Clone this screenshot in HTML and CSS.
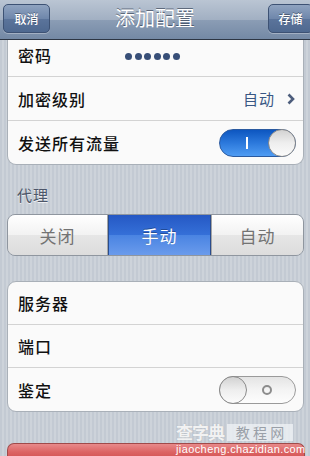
FILE: index.html
```html
<!DOCTYPE html>
<html lang="zh-CN">
<head>
<meta charset="utf-8">
<title>添加配置</title>
<link rel="stylesheet" href="styles.css">
</head>
<body>
<div class="screen">
  <header class="nav">
    <button class="nav-btn nav-btn-left">取消</button>
    <h1 class="nav-title">添加配置</h1>
    <button class="nav-btn nav-btn-right">存储</button>
  </header>
  <main class="content">
    <section class="group group-top">
      <div class="row row-first">
        <span class="row-label">密码</span>
        <span class="dots"><i></i><i></i><i></i><i></i><i></i><i></i></span>
      </div>
      <div class="row">
        <span class="row-label">加密级别</span>
        <span class="row-value">自动<svg class="chevron" width="8" height="12" viewBox="0 0 8 12"><path d="M1.5 1.5 L6 6 L1.5 10.5" fill="none" stroke="#4d5d7c" stroke-width="2.6" stroke-linecap="butt" stroke-linejoin="miter"/></svg></span>
      </div>
      <div class="row row-last">
        <span class="row-label">发送所有流量</span>
        <span class="switch switch-on"><span class="switch-mark-on"></span><span class="knob"></span></span>
      </div>
    </section>

    <div class="section-label">代理</div>

    <div class="segmented">
      <div class="seg seg-first">关闭</div>
      <div class="seg seg-active">手动</div>
      <div class="seg seg-last">自动</div>
    </div>

    <section class="group group-second">
      <div class="row">
        <span class="row-label">服务器</span>
      </div>
      <div class="row">
        <span class="row-label">端口</span>
      </div>
      <div class="row row-last">
        <span class="row-label">鉴定</span>
        <span class="switch switch-off"><span class="knob"></span><span class="switch-mark-off"></span></span>
      </div>
    </section>

    <div class="red-bar"></div>
  </main>

  <div class="watermark">
    <div class="wm-top"><span class="wm-brand">查字典</span><span class="wm-box">教 程 网</span></div>
    <div class="wm-url">jiaocheng.chazidian.com</div>
  </div>
</div>
</body>
</html>
```

FILE: styles.css
```css
html, body {
  margin: 0;
  padding: 0;
}
body {
  width: 310px;
  height: 456px;
  overflow: hidden;
  font-family: "Noto Sans CJK SC", "Liberation Sans", sans-serif;
}
.screen {
  position: relative;
  width: 310px;
  height: 456px;
  overflow: hidden;
  background: repeating-linear-gradient(90deg, #c3cad3 0px, #c3cad3 2px, #cdd3da 2px, #cdd3da 4px);
}

/* NAV */
.nav {
  height: 40px;
  box-sizing: border-box;
  display: flex;
  align-items: center;
  justify-content: space-between;
  position: relative;
  background: linear-gradient(#bac5d3 0%, #a2b0c3 50%, #8b9db5 51%, #7489a5 100%);
  border-bottom: 1px solid #2d3644;
  padding: 0 0 0 3px;
}
.nav-title {
  margin: 0;
  font-size: 20px;
  font-weight: 400;
  color: #fff;
  text-shadow: 0 -1px 0 rgba(40, 50, 70, 0.6);
  position: absolute;
  left: 0;
  right: 0;
  text-align: center;
  top: 5px;
  line-height: 26px;
  pointer-events: none;
}
.nav-btn {
  height: 29px;
  margin-top: -2px;
  border: 1px solid #3d5274;
  border-radius: 5px;
  background: linear-gradient(#8fa3c0 0%, #6f87ab 50%, #5b749b 51%, #4f6990 100%);
  color: #fff;
  font-family: "Noto Sans CJK SC", sans-serif;
  font-size: 12px;
  font-weight: 500;
  padding: 0;
  text-shadow: 0 -1px 0 rgba(0, 0, 0, 0.35);
  box-shadow: 0 1px 0 rgba(255, 255, 255, 0.3);
}
.nav-btn-left {
  width: 47px;
}
.nav-btn-right {
  width: 45px;
  margin-right: -3px;
}

/* GROUPS */
.group {
  background: #fafafa;
  margin: 0 6px 0 7px;
  border: 1px solid #a9b0b8;
  border-radius: 9px;
  overflow: hidden;
}
.group-top {
  border-top: none;
  border-radius: 0 0 9px 9px;
}
.row {
  height: 44px;
  box-sizing: border-box;
  border-bottom: 1px solid #d3d3d3;
  display: flex;
  align-items: center;
  justify-content: space-between;
  padding: 0 7px 0 10px;
}
.row-first {
  height: 37px;
  justify-content: flex-start;
}
.row-last {
  height: 43px;
  border-bottom: none;
}
.group-second .row {
  height: 43px;
}
.row-label {
  font-size: 16px;
  letter-spacing: 1px;
  font-weight: 500;
  color: #111;
  line-height: 20px;
}
.row-first .row-label {
  margin-top: -7px;
}
.dots {
  display: flex;
  gap: 2.6px;
  margin-left: 73px;
  margin-top: -4px;
}
.dots i {
  display: block;
  width: 7px;
  height: 7px;
  border-radius: 50%;
  background: #384f78;
}
.row-value {
  font-size: 15px;
  color: #395784;
  letter-spacing: 1px;
  display: flex;
  align-items: center;
}
.chevron {
  display: block;
  margin-left: 12px;
  margin-right: 1px;
}

/* SWITCHES */
.switch {
  position: relative;
  width: 77px;
  height: 28px;
  box-sizing: border-box;
  border-radius: 14px;
  display: flex;
  align-items: center;
}
.switch-on {
  background: linear-gradient(#0d56c0 0%, #2c79dc 50%, #4f9cf3 100%);
  border: 1px solid #2a5aa0;
  justify-content: flex-end;
}
.switch-off {
  background: linear-gradient(#e4e4e4 0%, #f4f4f4 50%, #fdfdfd 100%);
  border: 1px solid #9a9a9a;
  justify-content: flex-start;
}
.knob {
  width: 28px;
  height: 28px;
  box-sizing: border-box;
  border-radius: 50%;
  border: 1px solid #8a8a8a;
  background: linear-gradient(#d2d2d2 0%, #eeeeee 50%, #fbfbfb 100%);
  margin: -1px;
  flex: none;
}
.switch-mark-on {
  width: 2px;
  height: 12px;
  background: #fff;
  margin-right: 21px;
}
.switch-mark-off {
  width: 10px;
  height: 10px;
  box-sizing: border-box;
  border: 2px solid #8c8c8c;
  border-radius: 50%;
  margin-left: 16px;
}

/* SECTION LABEL */
.section-label {
  margin: 20px 0 0 17px;
  font-size: 15px;
  line-height: 20px;
  letter-spacing: 1px;
  color: #4c5568;
  text-shadow: 0 1px 0 rgba(255, 255, 255, 0.7);
}

/* SEGMENTED */
.segmented {
  margin: 9px 6px 0 7px;
  height: 42px;
  display: flex;
  border: 1px solid #8f969f;
  border-radius: 8px;
  overflow: hidden;
  box-sizing: border-box;
}
.seg {
  display: flex;
  align-items: center;
  justify-content: center;
  font-size: 17px;
  letter-spacing: 1px;
  color: #737373;
  background: linear-gradient(#ffffff 0%, #f2f2f2 50%, #e6e6e6 51%, #dcdcdc 100%);
}
.seg-first {
  width: 99px;
  border-right: 1px solid #a6a6a6;
}
.seg-active {
  width: 103px;
  color: #fff;
  background: linear-gradient(#2558c4 0%, #3570d8 50%, #4a84e2 51%, #6a9bec 100%);
  border-left: 1px solid #2a4c8c;
  border-right: 1px solid #2a4c8c;
  box-sizing: border-box;
  text-shadow: 0 -1px 0 rgba(0, 0, 0, 0.3);
}
.seg-last {
  flex: 1;
  border-left: 1px solid #a6a6a6;
}

.group-second {
  margin-top: 25px;
}

/* RED BAR */
.red-bar {
  margin: 31px 5px 0 7px;
  height: 16px;
  border: 1px solid #a04a4a;
  border-bottom: none;
  border-radius: 7px 7px 0 0;
  background: linear-gradient(#e88a8a 0%, #dc6464 50%, #d04f4f 100%);
}

/* WATERMARK */
.watermark {
  position: absolute;
  left: 176px;
  top: 423px;
  width: 126px;
}
.wm-top {
  display: flex;
  align-items: center;
  height: 18px;
}
.wm-brand {
  font-size: 17px;
  font-weight: 700;
  color: rgba(255, 255, 255, 0.85);
  line-height: 18px;
  letter-spacing: -1px;
  text-shadow: 0 0 1px rgba(150, 150, 150, 0.6);
}
.wm-box {
  margin-left: 3px;
  height: 17px;
  width: 66px;
  background: rgba(235, 238, 242, 0.85);
  color: #9aa0a8;
  font-size: 14px;
  line-height: 17px;
  text-align: center;
}
.wm-url {
  margin-top: 2px;
  font-family: "Liberation Sans", sans-serif;
  font-size: 11px;
  line-height: 12px;
  color: #fff;
  letter-spacing: 0.4px;
  white-space: nowrap;
}
```
